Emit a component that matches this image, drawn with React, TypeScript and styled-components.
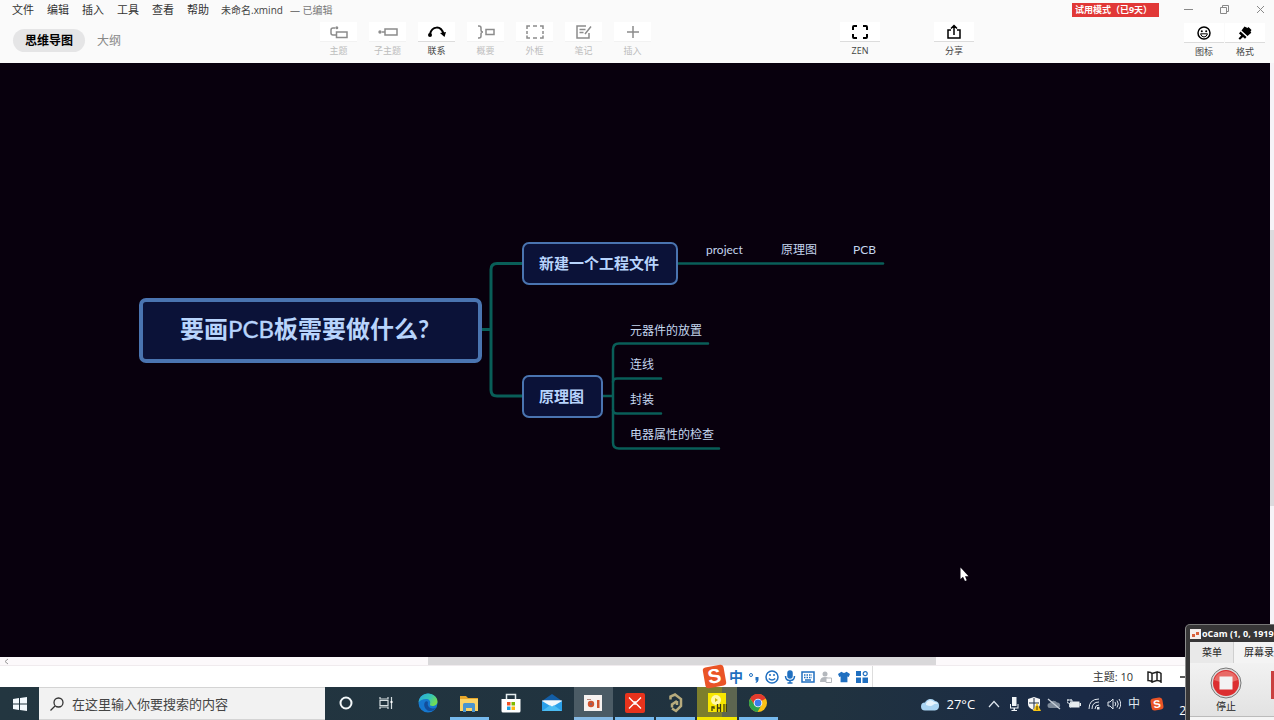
import React from "react";
import styled, { createGlobalStyle, css } from "styled-components";

const sans = `"Open Sans", "Noto Sans CJK SC", sans-serif`;

const GlobalStyle = createGlobalStyle`
  * { box-sizing: border-box; }
  body { margin: 0; background: #fafafa; font-family: ${sans}; overflow: hidden; }
  button { border: 0; padding: 0; margin: 0; background: none; font: inherit; color: inherit; cursor: pointer; }
  svg { display: block; flex: none; }
`;

const Desktop = styled.div`
  position: relative;
  display: flex;
  flex-direction: column;
  min-height: 100vh;
  overflow: hidden;
`;

/* ---------- header ---------- */

const TitleBar = styled.div`
  display: flex;
  align-items: center;
  height: 20px;
  padding-left: 12px;
  padding-bottom: 1px;
  background: #fafafa;
  font-size: 11px;
  line-height: 18px;
  color: #333;
`;

const Menu = styled.nav`
  display: flex;
  gap: 13px;
`;

const FileName = styled.span`
  margin-left: 12px;
  color: #444;
  font-size: 10px;
`;

const FileState = styled.span`
  margin-left: 7px;
  color: #777;
  font-size: 10px;
`;

const TrialBadge = styled.button`
  margin-left: auto;
  width: 87px;
  height: 14px;
  padding-right: 4px;
  background: #e13837;
  color: #fff;
  font-size: 9px;
  line-height: 14px;
  font-weight: 700;
  white-space: nowrap;
`;

const WindowButtons = styled.div`
  display: flex;
  gap: 8px;
  margin-left: 15px;
  color: #888;
`;

const WindowButton = styled.button`
  display: grid;
  place-items: center;
  width: 28px;
  height: 18px;
`;

const Toolbar = styled.div`
  display: flex;
  align-items: flex-start;
  height: 43px;
  padding-left: 13px;
  background: #fafafa;
`;

const Tabs = styled.div`
  display: flex;
  width: 307px;
  padding-top: 9px;
`;

const Tab = styled.button<{ $active?: boolean }>`
  height: 23px;
  padding: 0 12px;
  border-radius: 12px;
  font-size: 12px;
  line-height: 23px;
  color: #888;
  ${(p) =>
    p.$active &&
    css`
      background: #e5e5e6;
      color: #000;
      font-weight: 700;
    `}
`;

const ToolGroup = styled.div<{ $gap: number; $push?: boolean }>`
  display: flex;
  gap: ${(p) => p.$gap}px;
  margin-left: ${(p) => (p.$push ? "auto" : "0")};
  padding-top: 2px;
`;

const ToolButton = styled.button<{ $off?: boolean; $wide?: boolean }>`
  display: flex;
  flex-direction: column;
  align-items: center;
  width: ${(p) => (p.$wide ? 40 : 37)}px;
  color: ${(p) => (p.$off ? "#bdbdbd" : "#444")};
  font-size: 9px;
  line-height: 14px;
  white-space: nowrap;
`;

const ToolFace = styled.span<{ $off?: boolean }>`
  display: grid;
  place-items: center;
  width: 100%;
  height: 20px;
  margin-bottom: 2px;
  background: #fff;
  border-bottom: 1px solid ${(p) => (p.$off ? "#f2f2f2" : "#dcdcdc")};
  color: ${(p) => (p.$off ? "#8c8c8c" : "#000")};
`;

const ViewTools = styled(ToolGroup)`
  margin-left: 189px;
`;

const PanelTools = styled(ToolGroup)`
  margin-right: 9px;
  padding-top: 3px;
`;

/* ---------- map canvas ---------- */

const Stage = styled.main`
  display: flex;
  flex: 1;
  min-height: 590px;
  background: #08000d;
`;

const Canvas = styled.div`
  position: relative;
  flex: 1;
  overflow: hidden;
`;

const VerticalTrack = styled.div`
  width: 4px;
  padding-top: 167px;
  background: #f6f3f7;
`;

const VerticalThumb = styled.div`
  height: 276px;
  background: #dcdadd;
`;

const MindMap = styled.div`
  position: absolute;
  left: 139px;
  top: 179px;
`;

const Links = styled.svg`
  overflow: visible;
`;

const Topic = styled.div<{ $x: number; $y: number; $w: number; $h: number; $root?: boolean }>`
  position: absolute;
  left: ${(p) => p.$x}px;
  top: ${(p) => p.$y}px;
  width: ${(p) => p.$w}px;
  height: ${(p) => p.$h}px;
  display: flex;
  align-items: center;
  padding-bottom: ${(p) => (p.$root ? 4 : 2)}px;
  border: ${(p) => (p.$root ? 4 : 2)}px solid #4a74b0;
  border-radius: 7px;
  background: #0b1238;
  color: #b8d4fc;
  padding-left: ${(p) => (p.$root ? 37 : 15)}px;
  font-family: Lato, "Noto Sans CJK SC", sans-serif;
  font-weight: 700;
  font-size: ${(p) => (p.$root ? 24 : 15)}px;
  line-height: 24px;
  white-space: nowrap;
`;

const Latin = styled.span`
  font-family: Lato, sans-serif;
  font-weight: 400;
  -webkit-text-stroke: 0.4px currentColor;
`;

const Leaf = styled.div<{ $x: number; $y: number }>`
  position: absolute;
  left: ${(p) => p.$x}px;
  top: ${(p) => p.$y - 8}px;
  color: #c4d6ee;
  font-family: Lato, "Noto Sans CJK SC", sans-serif;
  font-size: 12px;
  line-height: 18px;
  white-space: nowrap;
`;

const Pointer = styled.svg`
  position: absolute;
  left: 960px;
  top: 504px;
`;

const HorizontalTrack = styled.div`
  display: flex;
  align-items: center;
  height: 9px;
  padding-left: 4px;
  background: #fcf9fb;
  border-bottom: 1px solid #f0ebee;
`;

const HorizontalThumb = styled.div`
  width: 40%;
  height: 8px;
  margin-left: 33%;
  background: #d9d8da;
`;

const StatusBar = styled.div`
  display: flex;
  align-items: center;
  justify-content: flex-end;
  gap: 14px;
  height: 21px;
  padding-right: 85px;
  background: #fff;
  color: #333;
  font-size: 11px;
  line-height: 18px;
`;

/* ---------- input method bar ---------- */

const ImeBar = styled.div`
  position: absolute;
  left: 702px;
  bottom: 33px;
  display: flex;
  align-items: center;
  height: 21px;
  padding-right: 1px;
  border-right: 1px solid #ddd;
  background: #fff;
  color: #1f6fc0;
`;

const ImeButton = styled.button`
  display: grid;
  place-items: center;
  width: 18px;
  height: 20px;
  font-size: 14px;
  line-height: 18px;
  font-weight: 700;
`;

const ImeLogo = styled.button<{ $size: number }>`
  display: grid;
  place-items: center;
  width: ${(p) => p.$size}px;
  height: ${(p) => p.$size}px;
  border-radius: 3px;
  transform: rotate(-10deg);
  background: #ea5426;
  color: #fff;
  font-family: "Liberation Sans", sans-serif;
  font-weight: 700;
  font-size: ${(p) => p.$size - 1}px;
  line-height: ${(p) => p.$size}px;
`;

const ImeLogoSlot = styled.span`
  display: grid;
  place-items: center;
  width: 25px;
`;

/* ---------- taskbar ---------- */

const Taskbar = styled.footer`
  display: flex;
  height: 33px;
  background: linear-gradient(90deg, #233640 0%, #20323f 65%, #1a2a46 85%, #1a2844 100%);
  color: #fff;
`;

const StartButton = styled.button`
  display: grid;
  place-items: center;
  width: 39px;
`;

const SearchBox = styled.label`
  display: flex;
  align-items: center;
  gap: 8px;
  width: 286px;
  padding-left: 11px;
  background: #f2f2f2;
  border-top: 1px solid #d4d4d4;
  border-bottom: 1px solid #d4d4d4;
  color: #333;
`;

const SearchInput = styled.input`
  flex: 1;
  min-width: 0;
  padding: 0;
  border: 0;
  outline: 0;
  background: none;
  font-family: ${sans};
  font-size: 13px;
  line-height: 20px;
  &::placeholder { color: #444; opacity: 1; }
`;

const AppStrip = styled.div`
  display: grid;
  grid-template-columns: repeat(11, 1fr);
  width: 454px;
`;

const AppButton = styled.button<{ $line?: string; $face?: string }>`
  display: grid;
  place-items: center;
  margin: 0 1px;
  border-bottom: 3px solid ${(p) => p.$line || "transparent"};
  background: ${(p) => p.$face || "none"};
  padding-top: 2px;
`;

const Tray = styled.div`
  display: flex;
  align-items: center;
  margin-left: auto;
  padding-right: 88px;
`;

const Weather = styled.button`
  display: flex;
  align-items: center;
  gap: 7px;
  margin-right: 9px;
  font-size: 13px;
  line-height: 20px;
`;

const TrayButton = styled.button`
  display: grid;
  place-items: center;
  width: 20px;
  height: 24px;
  color: #dfe6ee;
  font-size: 12px;
  line-height: 18px;
`;

const Clock = styled.span`
  align-self: flex-end;
  margin-left: 10px;
  font-size: 12px;
  line-height: 18px;
`;

/* ---------- recorder window ---------- */

const Recorder = styled.section`
  position: absolute;
  right: 0;
  bottom: 0;
  width: 89px;
  height: 96px;
  padding-left: 4px;
  overflow: hidden;
  border-top-left-radius: 5px;
  border-left: 1px solid #8c8c8c;
  border-top: 1px solid #777;
  background: #373637;
`;

const RecorderTitle = styled.div`
  display: flex;
  align-items: center;
  gap: 1px;
  height: 17px;
  color: #fff;
  font-family: "Open Sans", sans-serif;
  font-weight: 700;
  font-size: 9px;
  line-height: 16px;
  white-space: nowrap;
`;

const RecorderTabs = styled.div`
  display: flex;
  height: 21px;
  background: #ececec;
  color: #222;
  font-size: 10px;
  line-height: 21px;
`;

const RecorderTab = styled.button<{ $active?: boolean }>`
  flex: ${(p) => (p.$active ? "1" : "0 0 44px")};
  padding-left: ${(p) => (p.$active ? 10 : 0)}px;
  text-align: ${(p) => (p.$active ? "left" : "center")};
  white-space: nowrap;
  background: ${(p) => (p.$active ? "#f4f4f4" : "#e9e9e9")};
  box-shadow: inset -1px 0 ${(p) => (p.$active ? "transparent" : "#cfcfcf")};
`;

const RecorderBody = styled.div`
  display: flex;
  align-items: flex-start;
  justify-content: space-between;
  height: 54px;
  padding: 4px 0 0 20px;
  background: linear-gradient(#f2f2f2, #e2e2e2);
  border-bottom: 1px solid #bbb;
`;

const StopButton = styled.button`
  display: flex;
  flex-direction: column;
  align-items: center;
  color: #222;
  font-size: 10px;
  line-height: 15px;
`;

const CaptureEdge = styled.span`
  width: 3px;
  height: 28px;
  margin-top: 4px;
  background: #c9403f;
`;

const RecorderFoot = styled.div`
  height: 3px;
  background: #f5f5f5;
`;

/* ---------- toolbar data ---------- */

const line = { fill: "none", stroke: "currentColor", strokeWidth: 2 } as const;

const tools = [
  {
    label: "主题",
    off: true,
    icon: (
      <svg width="18" height="14" viewBox="0 0 18 14" {...line} strokeWidth={1.5}>
        <path d="M6.500 7h10.500v5.500H6.500zM6.500 10H3Q1 10 1 8V5Q1 3 3 3h2" />
        <circle cx="6.800" cy="2.800" r="1.500" fill="currentColor" stroke="none" />
      </svg>
    ),
  },
  {
    label: "子主题",
    off: true,
    icon: (
      <svg width="20" height="12" viewBox="0 0 20 12" {...line} strokeWidth={1.5}>
        <path d="M7 3h12v6H7zM4 6h3" />
        <circle cx="2" cy="6" r="1.700" fill="currentColor" stroke="none" />
      </svg>
    ),
  },
  {
    label: "联系",
    icon: (
      <svg width="18" height="12" viewBox="0 0 18 12" {...line}>
        <path d="M2 8C4 0 13-1 15.500 8" />
        <circle cx="2" cy="9" r="2" fill="currentColor" stroke="none" />
        <path d="M12 7l6-1-1.500 5z" fill="currentColor" stroke="none" />
      </svg>
    ),
  },
  {
    label: "概要",
    off: true,
    icon: (
      <svg width="18" height="14" viewBox="0 0 18 14" {...line} strokeWidth={1.500}>
        <path d="M1 1h1q2 0 2 2v2q0 2 2 2-2 0-2 2v2q0 2-2 2H1M9 4.500h8v5H9z" />
      </svg>
    ),
  },
  {
    label: "外框",
    off: true,
    icon: (
      <svg width="18" height="14" viewBox="0 0 18 14" {...line} strokeWidth={1.5}>
        <path d="M1 4V1h3M7 1h4M14 1h3v3M17 6v3M17 10.500V13h-3M11 13H7M4 13H1v-2.500M1 9V6" />
      </svg>
    ),
  },
  {
    label: "笔记",
    off: true,
    icon: (
      <svg width="16" height="14" viewBox="0 0 16 14" {...line} strokeWidth={1.5}>
        <path d="M10 1H1v12h12V8M3.500 4.500h6M3.500 7.500h4M15 1.500L9 9" />
      </svg>
    ),
  },
  {
    label: "插入",
    off: true,
    icon: (
      <svg width="14" height="14" viewBox="0 0 14 14" {...line} strokeWidth={1.5}>
        <path d="M7 1v12M1 7h12" />
      </svg>
    ),
  },
];

const viewTools = [
  {
    label: "ZEN",
    icon: (
      <svg width="16" height="14" viewBox="0 0 16 14" {...line}>
        <path d="M1 5V2q0-1 1-1h3M11 1h3q1 0 1 1v3M15 9v3q0 1-1 1h-3M5 13H2q-1 0-1-1V9" />
      </svg>
    ),
  },
  {
    label: "分享",
    icon: (
      <svg width="14" height="15" viewBox="0 0 14 15" {...line} strokeWidth={1.500}>
        <path d="M4 6H1v8h12V6h-3M7 11V1.500M4 4.500l3-3 3 3" />
      </svg>
    ),
  },
];

const panelTools = [
  {
    label: "图标",
    icon: (
      <svg width="14" height="14" viewBox="0 0 14 14" {...line} strokeWidth={1.5}>
        <circle cx="7" cy="7" r="6" />
        <circle cx="4.800" cy="5.200" r="1" fill="currentColor" stroke="none" />
        <circle cx="9.200" cy="5.200" r="1" fill="currentColor" stroke="none" />
        <path d="M3.500 7.800h7Q9.500 11 7 11T3.500 7.800z" strokeWidth="1" />
      </svg>
    ),
  },
  {
    label: "格式",
    icon: (
      <svg width="14" height="14" viewBox="0 0 14 14" fill="currentColor">
        <path d="M6.500 .5l3 1.500 1-1L13.500 4l-1 1.500.8 1.200L9.500 10 3.500 4.500z" />
        <path d="M2.500 5.500L8.500 11 7 12.800 5 11l-3 2.800L.5 12.500 3.200 9.500 1 7.500z" />
      </svg>
    ),
  },
];

const leaves = [
  { text: "project", x: 567, y: 7 },
  { text: "原理图", x: 642, y: 7 },
  { text: "PCB", x: 714, y: 7 },
  { text: "元器件的放置", x: 491, y: 88 },
  { text: "连线", x: 491, y: 122 },
  { text: "封装", x: 491, y: 157 },
  { text: "电器属性的检查", x: 491, y: 192 },
];

const blue = "#76b9ed";

const apps = [
  {
    name: "Cortana",
    icon: (
      <svg width="14" height="14" viewBox="0 0 14 14" {...line} stroke="#f3f8fa">
        <circle cx="7" cy="7" r="5.500" />
      </svg>
    ),
  },
  {
    name: "任务视图",
    icon: (
      <svg width="15" height="14" viewBox="0 0 15 14" fill="none" stroke="#d5dde0" strokeWidth="1.200">
        <path d="M1 1v2h8V1M1 13v-2h8v2M1 4.500h8v5H1zM12.500 1v12" />
        <path d="M11.500 5h2v2h-2z" fill="#fff" stroke="none" />
      </svg>
    ),
  },
  {
    name: "Edge",
    icon: (
      <svg width="20" height="20" viewBox="0 0 20 20">
        <defs>
          <linearGradient id="edgeTop" x1="0" y1="0" x2="1" y2="0.500">
            <stop offset="0" stopColor="#2aa5df" />
            <stop offset="0.600" stopColor="#35c5b4" />
            <stop offset="1" stopColor="#72dc55" />
          </linearGradient>
        </defs>
        <circle cx="10" cy="10" r="9.500" fill="#1678cf" />
        <path d="M.5 9.500C1 4 5 .5 10 .5c5.500 0 9.500 4 9.500 8 0 3-2.500 4.500-5 4.500-2 0-3-1-2.500-2 1-3-1-5-4-5C4.500 6 2 7.500.5 9.500z" fill="url(#edgeTop)" />
        <path d="M7 9c-2 3 0 8 4 9 3 .5 6-1 7.500-3.500-5 2.500-10-.5-8.500-5C9.500 8 8 8 7 9z" fill="#124e9c" />
      </svg>
    ),
  },
  {
    name: "文件资源管理器",
    line: blue,
    icon: (
      <svg width="20" height="17" viewBox="0 0 20 17">
        <path d="M1 1h6l2 2h10v13H1z" fill="#e8a72a" />
        <path d="M1 4h18v12H1z" fill="#fbd367" />
        <path d="M4 17V9.500Q4 8 5.500 8h9Q16 8 16 9.500V17h-3v-4H7v4z" fill="#4a94cf" />
      </svg>
    ),
  },
  {
    name: "应用商店",
    icon: (
      <svg width="20" height="20" viewBox="0 0 20 20">
        <path d="M5.500 6V1.500h9V6" fill="none" stroke="#e6edf0" strokeWidth="1.500" />
        <path d="M.5 6h19v12q0 1.500-1.500 1.500H2Q.5 19.500.5 18z" fill="#fff" />
        <path d="M6 9h3.500v3.500H6z" fill="#f05023" />
        <path d="M10.500 9H14v3.500h-3.500z" fill="#7eb900" />
        <path d="M6 13.500h3.500V17H6z" fill="#1ba1e2" />
        <path d="M10.500 13.500H14V17h-3.500z" fill="#fdb813" />
      </svg>
    ),
  },
  {
    name: "邮件",
    icon: (
      <svg width="20" height="18" viewBox="0 0 20 18">
        <path d="M0 7l10-7 10 7v5H0z" fill="#135ea6" />
        <path d="M0 6.500h20V12H0z" fill="#eaf4fb" />
        <path d="M0 7l10 6 10-6v10H0z" fill="#2b9fe8" />
        <path d="M0 17l10-7 10 7z" fill="#4bbcf3" />
        <path d="M1 6.500h18L10 12.500z" fill="#f2f8fc" />
      </svg>
    ),
  },
  {
    name: "oCam",
    line: "#86b9e4",
    face: "#4b5b65",
    icon: (
      <svg width="18" height="16" viewBox="0 0 18 16">
        <path d="M0 0h18v16H0z" fill="#f6f1ef" />
        <circle cx="7" cy="9" r="2.200" fill="#8d5f6a" stroke="#d1532e" strokeWidth="2" />
        <path d="M13 5h2.500v8H13z" fill="#d1532e" />
        <path d="M3 4h4v1H3z" fill="#b9887c" />
      </svg>
    ),
  },
  {
    name: "XMind",
    line: blue,
    icon: (
      <svg width="20" height="20" viewBox="0 0 20 20">
        <rect width="20" height="20" rx="2" fill="#e8331c" />
        <path d="M4 4.500l4.500 4.500h3L16 4.500M4 15.500L8.500 11h3l4.500 4.500M8 8.500l4 3M12 8.500l-4 3" fill="none" stroke="#fff" strokeWidth="1.300" />
      </svg>
    ),
  },
  {
    name: "Altium Designer",
    line: blue,
    icon: (
      <svg width="16" height="20" viewBox="0 0 16 20" fill="none" stroke="#b7ab7d" strokeWidth="2.500">
        <path d="M2.500 6.500V3.500L7 1.500 13 6v7l-5 5-4-2.500M9 8L4 11.500v3M9 8v4" />
      </svg>
    ),
  },
  {
    name: "便笺",
    line: "#f3e600",
    face: "linear-gradient(90deg, #7d7f2c 0 62%, #5d6650 62%)",
    icon: (
      <svg width="20" height="20" viewBox="0 0 20 20">
        <path d="M1 0h18v19H1z" fill="#f7e600" />
        <circle cx="9" cy="7" r="5" fill="#fff7a8" />
        <path d="M8 5l3 2-3 2z" fill="#c9b400" />
        <path d="M5 18v-4h2v2M10.500 19v-8M10.500 15h3M13.500 19v-8M17 19v-8M19.300 19v-8" fill="none" stroke="#3d3b10" strokeWidth="1.300" />
      </svg>
    ),
  },
  {
    name: "Chrome",
    line: blue,
    icon: (
      <svg width="18" height="18" viewBox="0 0 18 18">
        <circle cx="9" cy="9" r="9" fill="#fbc116" />
        <path d="M9 9L1.200 4.500A9 9 0 0 1 16.800 4.500z" fill="#e33b2e" />
        <path d="M9 5h7.800a9 9 0 0 0-15.600-.5L5.500 11z" fill="#e33b2e" />
        <path d="M1.200 4.500A9 9 0 0 0 8.500 18l4-7L9 13 5.500 11z" fill="#2da24c" />
        <circle cx="9" cy="9" r="4.300" fill="#fff" />
        <circle cx="9" cy="9" r="3.400" fill="#3b7ded" />
      </svg>
    ),
  },
];

const tray = [
  {
    name: "显示隐藏的图标",
    icon: (
      <svg width="12" height="8" viewBox="0 0 12 8" {...line} strokeWidth={1.200}>
        <path d="M1 7l5-5.500L11 7" />
      </svg>
    ),
  },
  {
    name: "麦克风",
    icon: (
      <svg width="10" height="14" viewBox="0 0 10 14" fill="#f0f4f7">
        <path d="M3 0h4.500v9H3zM1 7h1v3.500h6.500V7h1v4.500H6V13h2v1H2.500v-1h2v-1.500H1z" />
      </svg>
    ),
  },
  {
    name: "安全中心",
    icon: (
      <svg width="13" height="14" viewBox="0 0 13 14">
        <path d="M6 0l6 2v5q0 4-6 6-6-2-6-6V2z" fill="#f6f6f6" />
        <path d="M6 1v11M1 6h10" stroke="#1d2d45" />
        <path d="M9 6l4 8H5z" fill="#f8c514" />
        <path d="M9 9v4" stroke="#483900" />
      </svg>
    ),
  },
  {
    name: "OneDrive",
    icon: (
      <svg width="14" height="12" viewBox="0 0 14 12">
        <path d="M3 10a2.500 2.500 0 0 1 0-5 4 4 0 0 1 7-.5 2.800 2.800 0 0 1 1 5.500z" fill="#7c8999" />
        <path d="M1 1l12 10" stroke="#cbd3dc" strokeWidth="1.300" />
      </svg>
    ),
  },
  {
    name: "电池",
    icon: (
      <svg width="14" height="10" viewBox="0 0 14 10">
        <path d="M3 2.500h9.500v6H3z" fill="#e8edf0" />
        <path d="M12.500 4H14v3h-1.500z" fill="#e8edf0" />
        <path d="M0 1h5v2.500q-2.500 2-5 0zM1 0v2M4 0v2M2.500 4v4H4" fill="none" stroke="#cfd8df" />
      </svg>
    ),
  },
  {
    name: "网络",
    icon: (
      <svg width="12" height="12" viewBox="0 0 12 12" {...line} strokeWidth={1}>
        <path d="M1 11Q1 1 11 1M4 11q0-7 7-7M7 11q0-4 4-4" />
        <path d="M9 9h2.500v2.500H9z" fill="currentColor" stroke="none" />
      </svg>
    ),
  },
  {
    name: "音量",
    icon: (
      <svg width="14" height="12" viewBox="0 0 14 12" {...line} strokeWidth={1}>
        <path d="M1 4h2l3-3v10L3 8H1zM8 4q1.500 2 0 4M10 2.500q2.500 3.500 0 7M12 1q3.500 5 0 10" />
      </svg>
    ),
  },
  { name: "输入语言", icon: "中" },
];

const imeTools = [
  { name: "中文", icon: "中" },
  {
    name: "标点",
    icon: (
      <svg width="12" height="12" viewBox="0 0 12 12" fill="currentColor">
        <circle cx="3" cy="4" r="1.500" fill="none" stroke="currentColor" />
        <path d="M7.500 6h3v3q0 2-2.500 3l-.5-1q1-.5 1-1.500h-1z" />
      </svg>
    ),
  },
  {
    name: "表情",
    icon: (
      <svg width="14" height="14" viewBox="0 0 14 14" {...line} strokeWidth={1.500}>
        <circle cx="7" cy="7" r="6" />
        <path d="M5 4v2M9 4v2M3.800 8.500q3.200 3 6.400 0" />
      </svg>
    ),
  },
  {
    name: "语音",
    icon: (
      <svg width="12" height="14" viewBox="0 0 12 14" {...line} strokeWidth={1.500}>
        <rect x="4" y="1" width="4" height="7" rx="2" fill="currentColor" />
        <path d="M1.500 6q0 4.500 4.500 4.500T10.500 6M6 10.500V13M3.500 13h5" />
      </svg>
    ),
  },
  {
    name: "软键盘",
    icon: (
      <svg width="14" height="12" viewBox="0 0 14 12" {...line} strokeWidth={1.500}>
        <path d="M1 1h12v10H1z" />
        <path d="M3 4h8M3 6.500h8" strokeDasharray="1.500 1" />
        <path d="M4 9h6" />
      </svg>
    ),
  },
  {
    name: "账户",
    icon: (
      <svg width="12" height="14" viewBox="0 0 12 14" fill="#b4b8bd">
        <circle cx="5" cy="4" r="2.500" />
        <path d="M0 12q0-5 5-5 2 0 3 1v4z" />
        <path d="M6 8h5.500v4.500H6z" fill="#fff" stroke="#b4b8bd" />
      </svg>
    ),
  },
  {
    name: "皮肤",
    icon: (
      <svg width="12" height="12" viewBox="0 0 14 12" fill="currentColor">
        <path d="M4 0q3 2.500 6 0l4 2.500-1.500 3.500-1.500-.5V12H3V5.500L1.500 6 0 2.500z" />
      </svg>
    ),
  },
  {
    name: "工具箱",
    icon: (
      <svg width="12" height="12" viewBox="0 0 12 12" fill="currentColor">
        <path d="M0 0h5v5H0zM0 6.500h5V12H0zM6.500 6.500H12V12H6.500z" />
        <circle cx="9.200" cy="2.700" r="2" fill="none" stroke="currentColor" strokeWidth="1.200" />
      </svg>
    ),
  },
];

type ToolItem = { label: string; icon: React.ReactNode; off?: boolean };

const Tool = ({ item, wide }: { item: ToolItem; wide?: boolean }) => (
  <ToolButton $off={item.off} $wide={wide} disabled={item.off}>
    <ToolFace $off={item.off}>{item.icon}</ToolFace>
    {item.label}
  </ToolButton>
);

export default function App() {
  return (
    <Desktop>
      <GlobalStyle />
      <header>
        <TitleBar>
          <Menu>
            {["文件", "编辑", "插入", "工具", "查看", "帮助"].map((name) => (
              <button key={name}>{name}</button>
            ))}
          </Menu>
          <FileName>未命名.xmind</FileName>
          <FileState>— 已编辑</FileState>
          <TrialBadge>试用模式（已9天）</TrialBadge>
          <WindowButtons>
            <WindowButton aria-label="最小化">
              <svg width="9" height="9" viewBox="0 0 9 9" {...line} strokeWidth={1}><path d="M0 4.500h9" /></svg>
            </WindowButton>
            <WindowButton aria-label="还原">
              <svg width="9" height="9" viewBox="0 0 9 9" {...line} strokeWidth={1}><path d="M.5 2.500h6v6h-6zM2.500 2.500v-2h6v6h-2" /></svg>
            </WindowButton>
            <WindowButton aria-label="关闭">
              <svg width="9" height="9" viewBox="0 0 9 9" {...line} strokeWidth={1}><path d="M1 1l7 7M8 1L1 8" /></svg>
            </WindowButton>
          </WindowButtons>
        </TitleBar>
        <Toolbar>
          <Tabs>
            <Tab $active>思维导图</Tab>
            <Tab>大纲</Tab>
          </Tabs>
          <ToolGroup $gap={12}>
            {tools.map((item) => <Tool key={item.label} item={item} />)}
          </ToolGroup>
          <ViewTools $gap={54}>
            {viewTools.map((item) => <Tool key={item.label} item={item} wide />)}
          </ViewTools>
          <PanelTools $gap={1} $push>
            {panelTools.map((item) => <Tool key={item.label} item={item} wide />)}
          </PanelTools>
        </Toolbar>
      </header>

      <Stage>
        <Canvas>
          <MindMap>
            <Links width="746" height="210" viewBox="0 0 746 210" fill="none" stroke="#095e58" strokeWidth="2.500" strokeLinecap="round">
              <path strokeWidth="3" d="M343 87.500H352M383 21.500H358Q352 21.500 352 27.500V148Q352 154 358 154H383" />
              <path d="M539 21.500H744" />
              <path d="M464 154H474M569 101.500H480Q474 101.500 474 107.500V200.500Q474 206.500 480 206.500H580" />
              <path d="M474 140Q474 136.500 478 136.500H522M474 168Q474 171.500 478 171.500H522" />
            </Links>
            <Topic $x={0} $y={56} $w={343} $h={65} $root>
              要画<Latin>PCB</Latin>板需要做什么?
            </Topic>
            <Topic $x={383} $y={0} $w={156} $h={43}>新建一个工程文件</Topic>
            <Topic $x={383} $y={133} $w={81} $h={43}>原理图</Topic>
            {leaves.map((leaf) => (
              <Leaf key={leaf.text} $x={leaf.x} $y={leaf.y}>{leaf.text}</Leaf>
            ))}
          </MindMap>
          <Pointer width="9" height="14" viewBox="0 0 9 14">
            <path d="M.5 .5v11.500l2.500-2.300L5 14l1.700-.8L5 9.200h3.500z" fill="#fff" />
          </Pointer>
        </Canvas>
        <VerticalTrack><VerticalThumb /></VerticalTrack>
      </Stage>

      <HorizontalTrack>
        <svg width="5" height="7" viewBox="0 0 5 7" fill="none" stroke="#999"><path d="M4 1L1 3.500 4 6" /></svg>
        <HorizontalThumb />
      </HorizontalTrack>
      <StatusBar>
        <span>主题: 10</span>
        <svg width="15" height="12" viewBox="0 0 15 12" {...line} stroke="#222" strokeWidth={1.500}>
          <path d="M1 1q3 0 4 1.500V11Q4 9.500 1 9.500zM5 2.500L10 1v8.500L5 11M10 1q3 0 4 1.500V11q-1-1.500-4-1.500" />
        </svg>
        <svg width="13" height="12" viewBox="0 0 13 12" {...line} stroke="#222" strokeWidth={1.500}><path d="M4 6h9" /></svg>
      </StatusBar>

      <Taskbar>
        <StartButton aria-label="开始">
          <svg width="14" height="14" viewBox="0 0 14 14" fill="#f2f8fc">
            <path d="M0 2l6-1v5.600H0zM7 .9L14 0v6.600H7zM0 7.500h6V13l-6-1zM7 7.500h7V14l-7-1z" />
          </svg>
        </StartButton>
        <SearchBox>
          <svg width="14" height="14" viewBox="0 0 14 14" {...line} strokeWidth={1.300}>
            <circle cx="8.500" cy="5.500" r="4.500" />
            <path d="M5 9l-4.500 4.500" />
          </svg>
          <SearchInput type="text" aria-label="搜索" placeholder="在这里输入你要搜索的内容" />
        </SearchBox>
        <AppStrip>
          {apps.map((app) => (
            <AppButton key={app.name} aria-label={app.name} $line={app.line} $face={app.face}>{app.icon}</AppButton>
          ))}
        </AppStrip>
        <Tray>
          <Weather>
            <svg width="19" height="14" viewBox="0 0 19 14">
              <path d="M4 13.500a4 4 0 0 1 0-8 6 6 0 0 1 10-1.500 4.800 4.800 0 0 1 0 9.500z" fill="#a9d4f2" />
              <path d="M5 8a4.500 4.500 0 0 1 8-3 4 4 0 0 1 4 2q-3-1-5 1T5 8z" fill="#e6f4fd" />
            </svg>
            27°C
          </Weather>
          {tray.map((item) => (
            <TrayButton key={item.name} aria-label={item.name}>{item.icon}</TrayButton>
          ))}
          <ImeLogoSlot><ImeLogo $size={12}>S</ImeLogo></ImeLogoSlot>
          <Clock>2</Clock>
        </Tray>
      </Taskbar>

      <ImeBar>
        <ImeLogoSlot><ImeLogo $size={21}>S</ImeLogo></ImeLogoSlot>
        {imeTools.map((item) => (
          <ImeButton key={item.name} aria-label={item.name}>{item.icon}</ImeButton>
        ))}
      </ImeBar>

      <Recorder>
        <RecorderTitle>
          <svg width="11" height="10" viewBox="0 0 11 10">
            <path d="M0 0h11v10H0z" fill="#f4eeee" />
            <path d="M2 5h3v3H2zM6 3h3v3H6z" fill="#d9603c" />
          </svg>
          oCam (1, 0, 1919
        </RecorderTitle>
        <RecorderTabs>
          <RecorderTab>菜单</RecorderTab>
          <RecorderTab $active>屏幕录</RecorderTab>
        </RecorderTabs>
        <RecorderBody>
          <StopButton>
            <svg width="32" height="32" viewBox="0 0 32 32">
              <circle cx="16" cy="16" r="15" fill="#ddd" stroke="#777" />
              <circle cx="16" cy="16" r="13" fill="#dc2e30" />
              <path d="M4 13a12.500 12.500 0 0 1 24 0q-12 5-24 0z" fill="#e86a66" />
              <path d="M9.500 9.500h13v13h-13z" fill="#f3f3f3" />
            </svg>
            停止
          </StopButton>
          <CaptureEdge />
        </RecorderBody>
        <RecorderFoot />
      </Recorder>
    </Desktop>
  );
}
